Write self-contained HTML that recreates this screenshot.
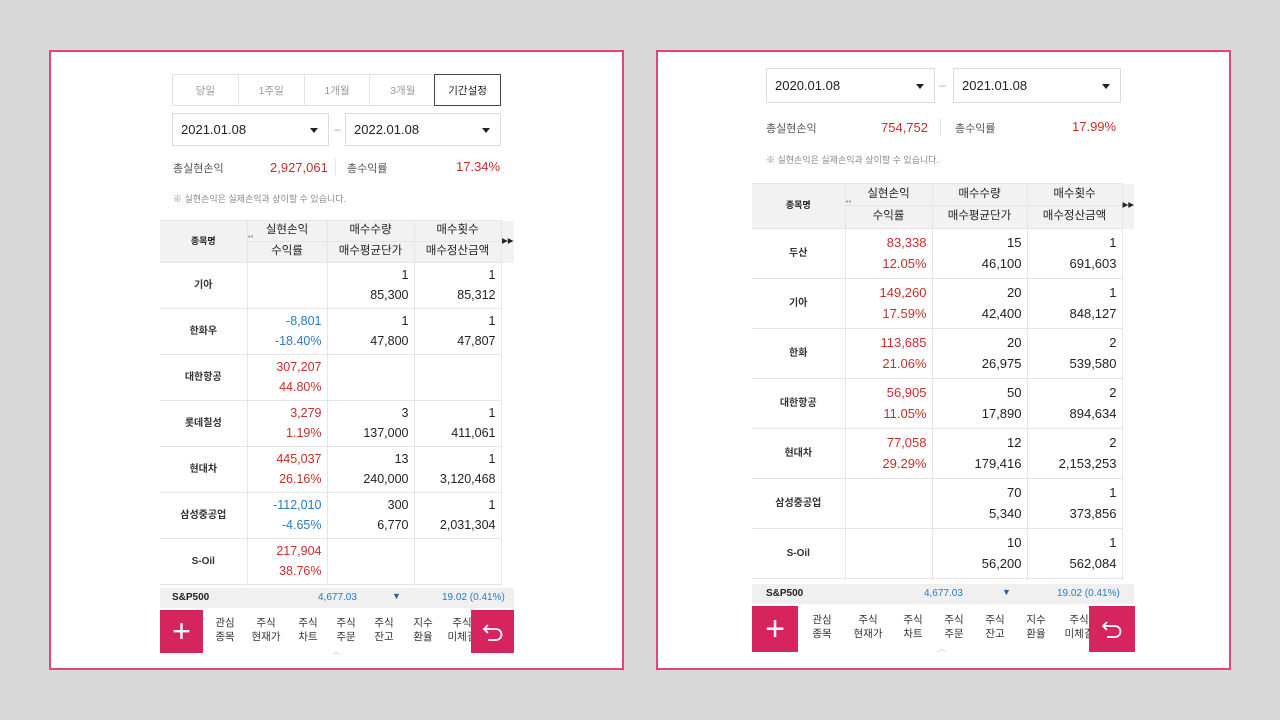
<!DOCTYPE html>
<html><head><meta charset="utf-8"><style>
*{margin:0;padding:0;box-sizing:border-box}
body{width:1280px;height:720px;background:#d9d9d9;position:relative;overflow:hidden;font-family:"Liberation Sans","Noto Sans CJK KR",sans-serif;color:#222}
.a{position:absolute}
.panel{position:absolute;background:#fff;border:2px solid #e0457b}
.sel{position:absolute;border:1px solid #ddd;background:#fff;font-size:13px;padding-left:8px;display:flex;align-items:center}
.sel:after{content:"";position:absolute;right:10px;top:50%;margin-top:-2px;border-left:4px solid transparent;border-right:4px solid transparent;border-top:5px solid #222}
.red{color:#c3302b}.blue{color:#2a7ac0}
.lbl{font-size:11px;color:#555}
.note{font-size:9px;color:#888}
.wrap{position:absolute;overflow:hidden}
table{border-collapse:collapse;table-layout:fixed}
td{border:1px solid #e6e6e6;text-align:right;padding-right:5px;vertical-align:middle;line-height:1.55}
td:first-child{border-left:none}
td.n{text-align:center;font-size:10px;font-weight:bold;padding:0;color:#333}
tr.h td{background:#f2f2f2;text-align:center;padding:0;font-size:11.5px;color:#222}
td.ar{font-size:7px;color:#aaa;text-align:center;padding:0;border:none}
.tick{position:absolute;background:#f0f0f0;font-size:10px;font-weight:bold}
.nav{position:absolute;background:#fff}
.pbtn{position:absolute;background:#d6245e;color:#fff;display:flex;align-items:center;justify-content:center}
.ni{position:absolute;font-size:10.5px;text-align:center;line-height:1.3;color:#333}
</style></head><body>

<!-- LEFT PANEL -->
<div class="panel" style="left:49px;top:50px;width:575px;height:620px"></div>
<div class="a" style="left:172px;top:74px;width:329px;height:32px;border:1px solid #e3e3e3;display:flex;font-size:10.5px;color:#999">
<div style="flex:1;display:flex;align-items:center;justify-content:center;border-right:1px solid #e3e3e3">당일</div>
<div style="flex:1;display:flex;align-items:center;justify-content:center;border-right:1px solid #e3e3e3">1주일</div>
<div style="flex:1;display:flex;align-items:center;justify-content:center;border-right:1px solid #e3e3e3">1개월</div>
<div style="flex:1;display:flex;align-items:center;justify-content:center">3개월</div>
<div style="flex:1;display:flex;align-items:center;justify-content:center;border:1px solid #444;margin:-1px;color:#222">기간설정</div>
</div>
<div class="sel" style="left:172px;top:113px;width:157px;height:33px">2021.01.08</div>
<div class="a" style="left:334px;top:122px;color:#aaa;font-size:12px">–</div>
<div class="sel" style="left:345px;top:113px;width:156px;height:33px">2022.01.08</div>
<div class="a lbl" style="left:173px;top:160px">총실현손익</div>
<div class="a red" style="left:270px;top:160px;font-size:13px">2,927,061</div>
<div class="a" style="left:335px;top:158px;width:1px;height:18px;background:#e6e6e6"></div>
<div class="a lbl" style="left:347px;top:160px">총수익률</div>
<div class="a red" style="left:456px;top:159px;font-size:13px">17.34%</div>
<div class="a note" style="left:173px;top:192px">※ 실현손익은 실제손익과 상이할 수 있습니다.</div>

<div class="wrap" style="left:160px;top:220px;width:354px;height:366px">
<table style="width:354px;font-size:12.5px">
<colgroup><col style="width:87px"><col style="width:80px"><col style="width:87px"><col style="width:87px"><col style="width:13px"></colgroup>
<tr class="h" style="height:21px"><td rowspan="2" style="font-size:9px;font-weight:bold">종목명</td><td>실현손익</td><td>매수수량</td><td>매수횟수</td><td rowspan="2" class="ar">▸▸</td></tr>
<tr class="h" style="height:21px"><td>수익률</td><td>매수평균단가</td><td>매수정산금액</td></tr>
<tr style="height:46px"><td class="n">기아</td><td></td><td>1<br>85,300</td><td>1<br>85,312</td><td style="border:none"></td></tr>
<tr style="height:46px"><td class="n">한화우</td><td class="blue">-8,801<br>-18.40%</td><td>1<br>47,800</td><td>1<br>47,807</td><td style="border:none"></td></tr>
<tr style="height:46px"><td class="n">대한항공</td><td class="red">307,207<br>44.80%</td><td></td><td></td><td style="border:none"></td></tr>
<tr style="height:46px"><td class="n">롯데칠성</td><td class="red">3,279<br>1.19%</td><td>3<br>137,000</td><td>1<br>411,061</td><td style="border:none"></td></tr>
<tr style="height:46px"><td class="n">현대차</td><td class="red">445,037<br>26.16%</td><td>13<br>240,000</td><td>1<br>3,120,468</td><td style="border:none"></td></tr>
<tr style="height:46px"><td class="n">삼성중공업</td><td class="blue">-112,010<br>-4.65%</td><td>300<br>6,770</td><td>1<br>2,031,304</td><td style="border:none"></td></tr>
<tr style="height:46px"><td class="n">S-Oil</td><td class="red">217,904<br>38.76%</td><td></td><td></td><td style="border:none"></td></tr>
<tr style="height:46px"><td></td><td></td><td></td><td></td><td style="border:none"></td></tr>
</table></div>
<div class="a" style="left:247px;top:233px;font-size:6px;color:#aaa">◂◂</div>
<div class="tick" style="left:160px;top:588px;width:354px;height:20px">
<span class="a" style="left:12px;top:4px">S&amp;P500</span>
<span class="a blue" style="left:158px;top:4px;font-weight:normal">4,677.03</span>
<span class="a" style="left:232px;top:3px;color:#1d64b0;font-size:9px">▼</span>
<span class="a blue" style="left:282px;top:4px;font-weight:normal">19.02 (0.41%)</span></div>
<div class="nav" style="left:160px;top:610px;width:354px;height:43px">
<div class="pbtn" style="left:0;top:0;width:43px;height:43px;font-size:32px;font-weight:200">+</div>
<div class="ni" style="left:50px;top:7px;width:30px">관심<br>종목</div>
<div class="ni" style="left:88px;top:7px;width:36px">주식<br>현재가</div>
<div class="ni" style="left:133px;top:7px;width:30px">주식<br>차트</div>
<div class="ni" style="left:171px;top:7px;width:30px">주식<br>주문</div>
<div class="ni" style="left:209px;top:7px;width:30px">주식<br>잔고</div>
<div class="ni" style="left:248px;top:7px;width:30px">지수<br>환율</div>
<div class="ni" style="left:284px;top:7px;width:36px">주식<br>미체결</div>
<div class="pbtn" style="left:311px;top:0;width:43px;height:43px"><svg width="22" height="20" viewBox="0 0 22 20"><path d="M6 3 L2 7 L6 11 M2 7 H14 A5.5 5.5 0 0 1 14 18 H6" fill="none" stroke="#fff" stroke-width="1.8"/></svg></div>
</div>
<div class="a" style="left:332px;top:646px;font-size:8px;color:#bbb">︿</div>

<!-- RIGHT PANEL -->
<div class="panel" style="left:656px;top:50px;width:575px;height:620px"></div>
<div class="sel" style="left:766px;top:68px;width:169px;height:35px">2020.01.08</div>
<div class="a" style="left:939px;top:78px;color:#aaa;font-size:12px">–</div>
<div class="sel" style="left:953px;top:68px;width:168px;height:35px">2021.01.08</div>
<div class="a lbl" style="left:766px;top:120px">총실현손익</div>
<div class="a red" style="left:881px;top:120px;font-size:13px">754,752</div>
<div class="a" style="left:940px;top:118px;width:1px;height:18px;background:#e6e6e6"></div>
<div class="a lbl" style="left:955px;top:120px">총수익률</div>
<div class="a red" style="left:1072px;top:119px;font-size:13px">17.99%</div>
<div class="a note" style="left:766px;top:153px">※ 실현손익은 실제손익과 상이할 수 있습니다.</div>

<div class="wrap" style="left:752px;top:183px;width:382px;height:398px">
<table style="width:382px;font-size:13px">
<colgroup><col style="width:93px"><col style="width:87px"><col style="width:95px"><col style="width:95px"><col style="width:12px"></colgroup>
<tr class="h" style="height:22px"><td rowspan="2" style="font-size:9px;font-weight:bold">종목명</td><td>실현손익</td><td>매수수량</td><td>매수횟수</td><td rowspan="2" class="ar">▸▸</td></tr>
<tr class="h" style="height:23px"><td>수익률</td><td>매수평균단가</td><td>매수정산금액</td></tr>
<tr style="height:50px"><td class="n">두산</td><td class="red">83,338<br>12.05%</td><td>15<br>46,100</td><td>1<br>691,603</td><td style="border:none"></td></tr>
<tr style="height:50px"><td class="n">기아</td><td class="red">149,260<br>17.59%</td><td>20<br>42,400</td><td>1<br>848,127</td><td style="border:none"></td></tr>
<tr style="height:50px"><td class="n">한화</td><td class="red">113,685<br>21.06%</td><td>20<br>26,975</td><td>2<br>539,580</td><td style="border:none"></td></tr>
<tr style="height:50px"><td class="n">대한항공</td><td class="red">56,905<br>11.05%</td><td>50<br>17,890</td><td>2<br>894,634</td><td style="border:none"></td></tr>
<tr style="height:50px"><td class="n">현대차</td><td class="red">77,058<br>29.29%</td><td>12<br>179,416</td><td>2<br>2,153,253</td><td style="border:none"></td></tr>
<tr style="height:50px"><td class="n">삼성중공업</td><td></td><td>70<br>5,340</td><td>1<br>373,856</td><td style="border:none"></td></tr>
<tr style="height:50px"><td class="n">S-Oil</td><td></td><td>10<br>56,200</td><td>1<br>562,084</td><td style="border:none"></td></tr>
<tr style="height:50px"><td></td><td></td><td></td><td></td><td style="border:none"></td></tr>
</table></div>
<div class="a" style="left:845px;top:198px;font-size:6px;color:#aaa">◂◂</div>
<div class="tick" style="left:752px;top:584px;width:382px;height:20px">
<span class="a" style="left:14px;top:4px">S&amp;P500</span>
<span class="a blue" style="left:172px;top:4px;font-weight:normal">4,677.03</span>
<span class="a" style="left:250px;top:3px;color:#1d64b0;font-size:9px">▼</span>
<span class="a blue" style="left:305px;top:4px;font-weight:normal">19.02 (0.41%)</span></div>
<div class="nav" style="left:752px;top:606px;width:383px;height:46px">
<div class="pbtn" style="left:0;top:0;width:46px;height:46px;font-size:34px;font-weight:200">+</div>
<div class="ni" style="left:55px;top:8px;width:30px">관심<br>종목</div>
<div class="ni" style="left:97px;top:8px;width:38px">주식<br>현재가</div>
<div class="ni" style="left:146px;top:8px;width:30px">주식<br>차트</div>
<div class="ni" style="left:187px;top:8px;width:30px">주식<br>주문</div>
<div class="ni" style="left:228px;top:8px;width:30px">주식<br>잔고</div>
<div class="ni" style="left:269px;top:8px;width:30px">지수<br>환율</div>
<div class="ni" style="left:308px;top:8px;width:38px">주식<br>미체결</div>
<div class="pbtn" style="left:337px;top:0;width:46px;height:46px"><svg width="22" height="20" viewBox="0 0 22 20"><path d="M6 3 L2 7 L6 11 M2 7 H14 A5.5 5.5 0 0 1 14 18 H6" fill="none" stroke="#fff" stroke-width="1.8"/></svg></div>
</div>
<div class="a" style="left:938px;top:643px;font-size:8px;color:#bbb">︿</div>
</body></html>
